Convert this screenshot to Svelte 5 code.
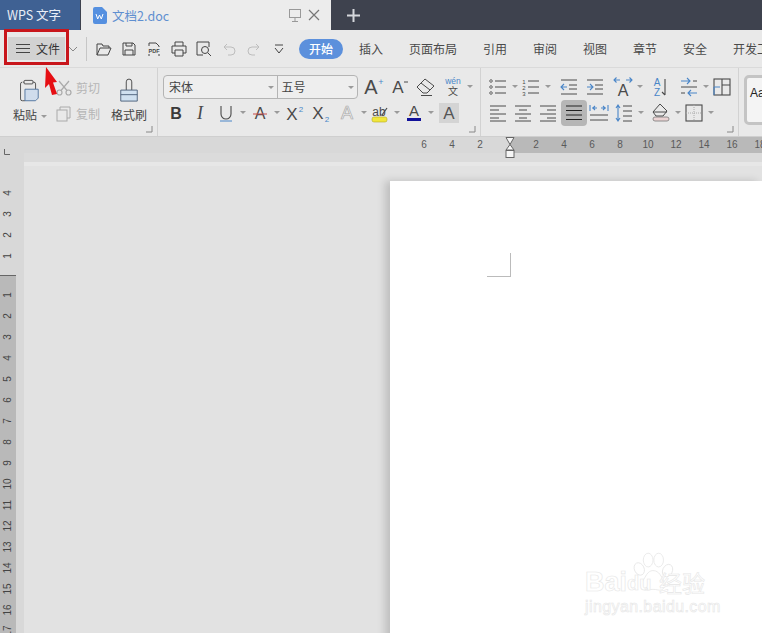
<script lang="ts">
  const dk = "#4a4a4a";
  const bl = "#4a86c8";
  const caps = 'fill="none" stroke-width="1.1"';

  // toolbar glyphs, 20x20 box, letters stay as svg text
  const letter = (ch: string, size = 16, color = dk, extra = "") =>
    `<text x="10" y="16" text-anchor="middle" font-family="Liberation Sans, sans-serif" font-size="${size}" fill="${color}" ${extra}>${ch}</text>`;
  const lines = (rows: number[][], color = dk) =>
    rows.map(([x1, x2, y]) => `<path d="M${x1} ${y}H${x2}" stroke="${color}" stroke-width="1"/>`).join("");

  const icons: Record<string, string> = {
    grow: `<text x="9" y="17" text-anchor="middle" font-family="Liberation Sans, sans-serif" font-size="20" fill="${dk}">A</text><text x="19" y="8" text-anchor="middle" font-family="Liberation Sans, sans-serif" font-size="9" fill="${bl}">+</text>`,
    shrink: letter("A", 17) + `<path d="M16 5h4" stroke="${dk}"/>`,
    eraser: `<g fill="none" stroke-width="1" stroke="${dk}"><path d="M1 10l8-8 9 7-7 7H7z"/><path d="M5 6l9 7"/><path d="M5 18.500h11"/></g>`,
    wen: `<text x="10" y="7" text-anchor="middle" font-family="Liberation Sans, sans-serif" font-size="8.5" fill="${bl}">wén</text><text x="10" y="18" text-anchor="middle" font-family="Noto Sans CJK SC, sans-serif" font-size="10" fill="${dk}">文</text>`,
    bold: letter("B", 16, "#3a3a3a", 'font-weight="700"'),
    italic: `<text x="10" y="16" text-anchor="middle" font-family="Liberation Serif, serif" font-style="italic" font-size="18" fill="${dk}">I</text>`,
    under: `<path d="M5 3v8a5 5 0 0 0 10 0V3" ${caps} stroke="${dk}"/><path d="M4 18h12" stroke="${bl}"/>`,
    strike: letter("A", 16, dk) + `<path d="M3 11h14" stroke="#c84a4a"/>`,
    sup: `<text x="8" y="17" text-anchor="middle" font-family="Liberation Sans, sans-serif" font-size="17" fill="${dk}">X</text><text x="17" y="9" text-anchor="middle" font-family="Liberation Sans, sans-serif" font-size="8" fill="${bl}">2</text>`,
    sub: `<text x="8" y="16" text-anchor="middle" font-family="Liberation Sans, sans-serif" font-size="17" fill="${dk}">X</text><text x="17" y="19" text-anchor="middle" font-family="Liberation Sans, sans-serif" font-size="8" fill="${bl}">2</text>`,
    hollow: `<text x="10" y="16" text-anchor="middle" font-family="Liberation Sans, sans-serif" font-size="18" fill="#f0f0f0" stroke="#aaa" stroke-width=".7">A</text>`,
    mark: `<rect x="2" y="14" width="15" height="5" rx="2" fill="#f1e63c" stroke="#b5ad20" stroke-width=".6"/><text x="9" y="13" text-anchor="middle" font-family="Liberation Sans, sans-serif" font-size="12" fill="${dk}">ab</text><path d="M12 12l5-7" stroke="${dk}" stroke-width="1.2"/>`,
    color: `<text x="10" y="13" text-anchor="middle" font-family="Liberation Sans, sans-serif" font-size="15" fill="${dk}">A</text><rect x="3" y="15" width="14" height="3" fill="#11119a"/>`,
    shadow: `<rect x="0" y="0" width="20" height="20" fill="#d4d4d4"/><text x="10" y="16" text-anchor="middle" font-family="Liberation Sans, sans-serif" font-size="17" fill="#555">A</text>`,
    bullets: `<g fill="none" stroke="${dk}" stroke-width=".8"><circle cx="3" cy="4" r="1.3"/><circle cx="3" cy="10" r="1.3"/><circle cx="3" cy="16" r="1.3"/></g>` + lines([[7, 18, 4], [7, 18, 10], [7, 18, 16]]),
    numbers: `<text x="3" y="7" text-anchor="middle" font-size="6" font-family="Liberation Sans, sans-serif" fill="${dk}">1</text><text x="3" y="13" text-anchor="middle" font-size="6" font-family="Liberation Sans, sans-serif" fill="${dk}">2</text><text x="3" y="19" text-anchor="middle" font-size="6" font-family="Liberation Sans, sans-serif" fill="${dk}">3</text>` + lines([[7, 18, 4], [7, 18, 10], [7, 18, 16]]),
    outdent: lines([[2, 18, 3], [10, 18, 8], [10, 18, 12], [2, 18, 17]]) + `<path d="M8 10H2m3-3l-3 3 3 3" ${caps} stroke="${bl}"/>`,
    indent: lines([[2, 18, 3], [10, 18, 8], [10, 18, 12], [2, 18, 17]]) + `<path d="M2 10h6m-3-3l3 3-3 3" ${caps} stroke="${bl}"/>`,
    spacing: `<text x="10" y="19" text-anchor="middle" font-family="Liberation Sans, sans-serif" font-size="16" fill="${dk}">A</text><path d="M1 3h6M3.500 .500L1 3l2.500 2.500M13 3h6M16.500 .500L19 3l-2.500 2.500" ${caps} stroke="${bl}"/>`,
    sort: `<text x="7" y="9" text-anchor="middle" font-family="Liberation Sans, sans-serif" font-size="10" fill="${bl}">A</text><text x="7" y="19" text-anchor="middle" font-family="Liberation Sans, sans-serif" font-size="10" fill="${bl}">Z</text><path d="M15 2v16m-3-3l3 3" ${caps} stroke="${dk}"/>`,
    swap: lines([[2, 18, 10]]) + `<path d="M2 4h9m-3-3l3 3-3 3M18 16H9m3-3l-3 3 3 3" ${caps} stroke="${bl}"/><path d="M14 4h4" stroke="${dk}"/><path d="M2 16h4" stroke="${dk}"/>`,
    table: `<rect x="2" y="2" width="16" height="16" ${caps} stroke="${dk}"/><path d="M10 2v16M10 8h8" ${caps} stroke="${dk}"/><path d="M2 10h6M2 10v8" ${caps} stroke="${bl}"/>`,
    left: lines([[2, 18, 3], [2, 11, 7], [2, 18, 11], [2, 11, 15], [2, 18, 18]]),
    center: lines([[2, 18, 3], [6, 14, 7], [2, 18, 11], [6, 14, 15], [2, 18, 18]]),
    right: lines([[2, 18, 3], [9, 18, 7], [2, 18, 11], [9, 18, 15], [2, 18, 18]]),
    justify: lines([[2, 18, 3], [2, 18, 7.5], [2, 18, 12], [2, 18, 16.5]], "#222"),
    spread: `<path d="M1 2v6M19 2v6M3 5h5m-2-2l-2 2 2 2M17 5h-5m2-2l2 2-2 2" ${caps} stroke="${bl}"/>` + lines([[1, 19, 12], [1, 19, 17]]),
    leading: `<path d="M4 2v16M2 5l2-3 2 3M2 15l2 3 2-3" ${caps} stroke="${bl}"/>` + lines([[9, 18, 3], [9, 18, 8], [9, 18, 13], [9, 18, 18]]),
    fill: `<g fill="none" stroke-width="1" stroke="${dk}"><path d="M9 1l7 7-4 5H5L2 9z"/><path d="M2 9h14"/></g><rect x="2" y="14" width="16" height="4" rx="2" fill="#ecd4d4" stroke="#777" stroke-width=".8"/>`,
    borders: `<rect x="2" y="2" width="16" height="16" ${caps} stroke="${dk}"/><path d="M10 2v16M2 10h16" stroke="#aaa" stroke-dasharray="1 1"/>`
  };

  // w = distance to the next icon centre
  const fontRow = [
    { i: "bold", w: 24 }, { i: "italic", w: 26 }, { i: "under", w: 34, c: 1 }, { i: "strike", w: 34, c: 1 },
    { i: "sup", w: 26 }, { i: "sub", w: 27 }, { i: "hollow", w: 33, c: 1, off: 1 }, { i: "mark", w: 34, c: 1 },
    { i: "color", w: 35, c: 1 }, { i: "shadow", w: 20 }
  ];
  const fontTop = [{ i: "grow", w: 26 }, { i: "shrink", w: 28 }, { i: "eraser", w: 27 }, { i: "wen", w: 30, c: 1 }];
  const paraTop = [
    { i: "bullets", w: 33, c: 1 }, { i: "numbers", w: 38, c: 1 }, { i: "outdent", w: 26 }, { i: "indent", w: 28 },
    { i: "spacing", w: 37, c: 1 }, { i: "sort", w: 29 }, { i: "swap", w: 33, c: 1 }, { i: "table", w: 20 }
  ];
  const paraRow = [
    { i: "left", w: 25 }, { i: "center", w: 25 }, { i: "right", w: 26 }, { i: "justify", w: 25, on: 1 },
    { i: "spread", w: 25 }, { i: "leading", w: 37, c: 1 }, { i: "fill", w: 33, c: 1 }, { i: "borders", w: 30, c: 1 }
  ];

  const tabs = ["插入", "页面布局", "引用", "审阅", "视图", "章节", "安全", "开发工具"];
  const topNums = [6, 4, 2, "", 2, 4, 6, 8, 10, 12, 14, 16, 18];
  const sideLight = [4, 3, 2, 1];
  const sideDark = Array.from({ length: 17 }, (_, n) => n + 1);
</script>

{#snippet tool(b)}
  <span class="tool" style="width:{b.w}px">
    <svg class:on={b.on} class:off={b.off} width="20" height="20" viewBox="0 0 20 20">{@html icons[b.i]}</svg>
    {#if b.c}<i class="caret"></i>{/if}
  </span>
{/snippet}

{#snippet launcher()}
  <svg class="launch" width="7" height="7" viewBox="0 0 7 7"><path d="M6 0v6H0" fill="none" stroke="#888"/></svg>
{/snippet}

<div class="app">
  <header class="titlebar">
    <div class="brand">WPS 文字</div>
    <div class="doctab">
      <svg width="15" height="17" viewBox="0 0 15 17">
        <path d="M1 2a2 2 0 0 1 2-2h7l5 5v10a2 2 0 0 1-2 2H3a2 2 0 0 1-2-2z" fill="#5590e0" />
        <path d="M4 7l1.700 5L7.500 8l1.800 4L11 7" fill="none" stroke="#fff" />
      </svg>
      <span class="docname">文档2.doc</span>
      <svg class="dock" width="12" height="13" viewBox="0 0 12 13" fill="none" stroke="#999">
        <rect x=".5" y=".5" width="11" height="8" />
        <path d="M6 9v3M3 12.500h6" />
      </svg>
      <svg class="close" width="12" height="12" viewBox="0 0 12 12" stroke="#777" stroke-width="1.200">
        <path d="M1 1l10 10M11 1L1 11" />
      </svg>
    </div>
    <svg class="plus" width="13" height="13" viewBox="0 0 13 13" stroke="#d5d7dc" stroke-width="2">
      <path d="M6.500 0v13M0 6.500h13" />
    </svg>
  </header>

  <nav class="menubar">
    <button class="filebtn" type="button">
      <svg width="14" height="9" viewBox="0 0 14 9" stroke="#444"><path d="M0 .5h14M0 4.500h14M0 8.500h14" /></svg>
      <span>文件</span>
    </button>
    <svg class="chev" width="10" height="6" viewBox="0 0 10 6" fill="none" stroke="#888"><path d="M1 1l4 4 4-4" /></svg>
    <span class="vbar"></span>
    <div class="qat">
      <svg width="16" height="16" viewBox="0 0 16 16" fill="none" stroke="#444"><path d="M1 14V3h5l1 2h6v2M1 14l3-7h11l-3 7z" /></svg>
      <svg width="16" height="16" viewBox="0 0 16 16" fill="none" stroke="#444"><path d="M2 2h10l2 2v10H2zM5 2v3h6V2M4 14V9h8v5" /></svg>
      <svg width="16" height="16" viewBox="0 0 16 16" fill="none" stroke="#444">
        <path d="M3 5V2h7l3 3v1M3 15v-2M13 15v-2" />
        <text x="8" y="12" text-anchor="middle" font-size="5.500" font-weight="700" font-family="Liberation Sans, sans-serif" fill="#444" stroke="none">PDF</text>
      </svg>
      <svg width="16" height="16" viewBox="0 0 16 16" fill="none" stroke="#444"><path d="M4 5V1h8v4M4 12H1V5h14v7h-3M4 9h8v6H4z" /></svg>
      <svg width="16" height="16" viewBox="0 0 16 16" fill="none" stroke="#444"><path d="M7 14H1V1h12v5" /><circle cx="9" cy="9" r="3.500" /><path d="M12 12l3 3" /></svg>
      <svg width="16" height="16" viewBox="0 0 16 16" fill="none" stroke="#bdbdbd"><path d="M3 6h7a4 4 0 0 1 0 8H7M6 3L3 6l3 3" /></svg>
      <svg width="16" height="16" viewBox="0 0 16 16" fill="none" stroke="#bdbdbd"><path d="M13 6H6a4 4 0 0 0 0 8h3M10 3l3 3-3 3" /></svg>
      <svg width="16" height="16" viewBox="0 0 16 16" fill="none" stroke="#444"><path d="M4 4h8M4 7l4 5 4-5" /></svg>
    </div>
    <span class="pill">开始</span>
    <div class="tabs">
      {#each tabs as tab}
        <span class="tab">{tab}</span>
      {/each}
    </div>
  </nav>

  <section class="ribbon">
    <div class="group clip">
      <div class="paste">
        <svg width="23" height="24" viewBox="0 0 26 26" fill="none" stroke="#444">
          <path d="M7 3h12a2 2 0 0 1 2 2v6M9 24H6a2 2 0 0 1-2-2V5a2 2 0 0 1 2-2" />
          <rect x="8" y="1" width="10" height="4" rx="1" fill="#e8e8e8" />
          <path d="M9 11h15v10l-3 3H9z" fill="#cfdcec" stroke="#4a6f9a" />
        </svg>
        <span>粘贴<i class="caret"></i></span>
      </div>
      <div class="cutcopy">
        <div>
          <svg width="16" height="16" viewBox="0 0 16 16" fill="none" stroke="#aaa" stroke-width="1.200">
            <circle cx="3.500" cy="12.500" r="2.500" /><circle cx="12.500" cy="12.500" r="2.500" /><path d="M5 10.500L13 1M11 10.500L3 1" />
          </svg>
          剪切
        </div>
        <div>
          <svg width="16" height="16" viewBox="0 0 16 16" fill="none" stroke="#aaa">
            <rect x="1" y="4" width="10" height="11" /><path d="M4 4V1h10v11h-3" />
          </svg>
          复制
        </div>
      </div>
      <div class="brush">
        <svg width="22" height="24" viewBox="0 0 24 26" fill="none" stroke="#4a5f7a">
          <path d="M9 12V3a3 3 0 0 1 6 0v9" stroke="#444" />
          <path d="M3 12h18v12H3z" fill="#cfe0f0" />
          <path d="M3 17h18" />
        </svg>
        <span>格式刷</span>
      </div>
      {@render launcher()}
    </div>

    <div class="group font">
      <div class="line top">
        <div class="combo">
          <span class="fname">宋体<i class="caret"></i></span>
          <span class="fsize">五号<i class="caret"></i></span>
        </div>
        <div class="tools">
          {#each fontTop as b}{@render tool(b)}{/each}
        </div>
      </div>
      <div class="line">
        {#each fontRow as b}{@render tool(b)}{/each}
      </div>
      {@render launcher()}
    </div>

    <div class="group para">
      <div class="line top">
        {#each paraTop as b}{@render tool(b)}{/each}
      </div>
      <div class="line">
        {#each paraRow as b}{@render tool(b)}{/each}
      </div>
      {@render launcher()}
    </div>

    <div class="group styles">
      <div class="stylebox">AaB</div>
    </div>
  </section>

  <div class="hruler">
    <span class="corner">
      <svg width="7" height="7" viewBox="0 0 7 7" fill="none" stroke="#666"><path d="M1.500 0v5.500H7" /></svg>
    </span>
    <div class="nums">
      <div class="shade"></div>
      <div class="numrow">
        {#each topNums as n}<span>{n}</span>{/each}
      </div>
      <svg class="marker" width="10" height="21" viewBox="0 0 10 21" fill="#f6f6f6" stroke="#666">
        <path d="M1 .5h8L5 7.500zM5 7.500L9 13H1z" />
        <rect x="1" y="13.500" width="8" height="7" />
      </svg>
    </div>
  </div>

  <div class="work">
    <aside class="vruler">
      <div class="vlight">
        {#each sideLight as n}<span><em>{n}</em></span>{/each}
      </div>
      <div class="vdark">
        {#each sideDark as n}<span><em>{n}</em></span>{/each}
      </div>
    </aside>
    <div class="canvas">
      <div class="page">
        <div class="margin"></div>
        <div class="mark">
          <svg class="paw" width="42" height="42" viewBox="0 0 52 50" fill="#fff" stroke="#e6e6e6">
            <ellipse cx="9" cy="20" rx="6" ry="8" transform="rotate(-25 9 20)" />
            <ellipse cx="20" cy="9" rx="6" ry="8.500" />
            <ellipse cx="33" cy="9" rx="6" ry="8.500" />
            <ellipse cx="44" cy="22" rx="6" ry="8" transform="rotate(25 44 22)" />
            <path d="M26 22c8 0 10 8 14 13 3 5-1 13-8 11-4-1-8-1-12 0-7 2-11-6-7-11 4-5 6-13 13-13z" />
          </svg>
          <div class="logo"><span>Bai</span><span class="du">du</span><span class="jy">经验</span></div>
          <div class="url">jingyan.baidu.com</div>
        </div>
      </div>
    </div>
  </div>

  <!-- annotation painted over the screenshot -->
  <div class="redbox"></div>
  <svg class="arrow" width="16" height="30" viewBox="0 0 16 30"><path d="M2 0L13 15 9 15.500 13 27 8 28 5 17 1 21z" fill="#e60f14" /></svg>
</div>

<style>
  :global(body) {
    margin: 0;
    background: #e2e2e2;
  }

  .app {
    position: relative;
    width: 762px;
    height: 633px;
    overflow: hidden;
    font-family: "Noto Sans CJK SC", "Liberation Sans", sans-serif;
    font-size: 12px;
    color: #444;
  }

  svg {
    display: block;
    flex: none;
    overflow: visible;
  }

  .titlebar {
    display: flex;
    height: 30px;
    background: #3e424e;
    align-items: stretch;
  }

  .brand {
    width: 73px;
    padding-left: 7px;
    margin-right: 1px;
    background: #3f6193;
    color: #e9eef6;
    font-size: 12.5px;
    line-height: 30px;
  }

  .doctab {
    width: 250px;
    display: flex;
    align-items: center;
    background: #ececec;
    padding-left: 11px;
    box-sizing: border-box;
  }

  .docname {
    margin-left: 5px;
    width: 177px;
    font-size: 12.5px;
    color: #5f8fd0;
  }

  .close {
    margin-left: 7px;
  }

  .plus {
    margin: 9px 0 0 16px;
  }

  .menubar {
    display: flex;
    align-items: center;
    height: 38px;
    background: #e9e9e9;
    border-bottom: 1px solid #dadada;
    box-sizing: border-box;
  }

  .menubar > * {
    flex: none;
  }

  .filebtn {
    margin-left: 8px;
    width: 57px;
    height: 23px;
    margin-top: -1px;
    padding: 0 0 0 8px;
    border: 0;
    background: #d2d2d2;
    display: flex;
    align-items: center;
    gap: 6px;
    font: inherit;
    color: #333;
    white-space: nowrap;
  }

  .chev {
    margin-left: 3px;
  }

  .vbar {
    width: 1px;
    height: 24px;
    margin-left: 8px;
    background: #c6c6c6;
  }

  .qat {
    display: flex;
    gap: 9px;
    margin-left: 9px;
  }

  .pill {
    margin-left: 12px;
    width: 44px;
    height: 20px;
    border-radius: 10px;
    background: #5c90dc;
    color: #fff;
    font-weight: 500;
    text-align: center;
    line-height: 20px;
  }

  .tabs {
    display: flex;
    gap: 26px;
    margin-left: 16px;
  }

  .tab {
    flex: none;
    color: #4a4a4a;
    white-space: nowrap;
  }

  .ribbon {
    display: flex;
    height: 69px;
    background: #e9e9e9;
    border-bottom: 1px solid #cfcfcf;
    box-sizing: border-box;
  }

  .group {
    position: relative;
    flex: none;
    border-right: 1px solid #d2d2d2;
    box-sizing: border-box;
  }

  .launch {
    position: absolute;
    right: 4px;
    bottom: 3px;
  }

  .clip {
    width: 158px;
    display: flex;
    color: #444;
  }

  .paste {
    width: 56px;
    padding: 11px 0 0 17px;
    box-sizing: border-box;
    display: flex;
    flex-direction: column;
    gap: 3px;
  }

  .paste span {
    margin-left: -4px;
    white-space: nowrap;
  }

  .cutcopy {
    width: 50px;
    padding-top: 11px;
    color: #b6b6b6;
    display: flex;
    flex-direction: column;
    gap: 9px;
  }

  .cutcopy div {
    display: flex;
    align-items: center;
    gap: 4px;
    height: 17px;
  }

  .brush {
    margin-left: 5px;
    display: flex;
    flex-direction: column;
    align-items: center;
    padding-top: 11px;
    gap: 3px;
  }

  .font {
    width: 323px;
    padding: 6px 0 0 5px;
  }

  .line {
    display: flex;
    align-items: center;
    height: 25px;
    margin-bottom: 1px;
  }

  .font .line:not(.top) {
    padding-left: 3px;
  }

  .tools {
    display: flex;
    margin-left: 4px;
  }

  .combo {
    display: flex;
    width: 195px;
    height: 24px;
    border: 1px solid #b4b4b4;
    border-radius: 4px;
    box-sizing: border-box;
    background: #eeeeee;
    line-height: 22px;
    flex: none;
  }

  .fname,
  .fsize {
    position: relative;
    padding-left: 5px;
    box-sizing: border-box;
    font-size: 12px;
  }

  .fname {
    width: 115px;
    border-right: 1px solid #b4b4b4;
  }

  .fsize {
    width: 79px;
    padding-left: 3px;
  }

  .fname .caret,
  .fsize .caret {
    position: absolute;
    right: 3px;
    top: 10px;
    margin: 0;
  }

  .tool {
    display: flex;
    align-items: center;
    flex: none;
  }

  .tool svg.on {
    padding: 2px;
    margin: -2px;
    background: #b6b6b6;
    border-radius: 3px;
    box-shadow: 0 0 0 1px #b6b6b6;
  }

  .caret {
    display: inline-block;
    width: 0;
    height: 0;
    margin-left: 4px;
    border: 3px solid transparent;
    border-top: 3px solid #9a9a9a;
    border-bottom: 0;
    vertical-align: middle;
  }

  .para {
    width: 258px;
    padding: 6px 0 0 7px;
  }

  .styles {
    flex: 1;
    border: 0;
    padding: 7px 0 0 5px;
  }

  .stylebox {
    width: 60px;
    height: 50px;
    padding: 8px 0 0 3px;
    box-sizing: border-box;
    background: #f4f4f4;
    border: 3px solid #c4c4c4;
    border-radius: 5px;
    color: #222;
    font-family: "Liberation Sans", sans-serif;
    font-size: 12px;
  }

  .hruler {
    display: flex;
    height: 25px;
    background: #dbdbdb;
  }

  .corner {
    width: 24px;
    padding: 12px 0 0 3px;
    box-sizing: border-box;
    flex: none;
    background: #d8d8d8;
  }

  .nums {
    position: relative;
    flex: 1;
    height: 16px;
    background: #d8d8d8;
  }

  .shade {
    position: absolute;
    left: 486px;
    right: 0;
    top: 0;
    bottom: 0;
    background: #b9b9b9;
  }

  .numrow {
    position: relative;
    display: flex;
    padding-left: 386px;
  }

  .numrow span {
    width: 28px;
    flex: none;
    text-align: center;
    font-size: 10px;
    line-height: 15px;
    color: #5a5a5a;
    font-family: "Liberation Sans", sans-serif;
  }

  .marker {
    position: absolute;
    left: 481px;
    top: 0;
  }

  .work {
    display: flex;
    height: 471px;
  }

  .vruler {
    width: 24px;
    flex: none;
    background: #d8d8d8;
    overflow: hidden;
  }

  .vlight,
  .vdark {
    width: 16px;
    text-align: center;
  }

  .vlight {
    height: 114px;
    padding-top: 20px;
    box-sizing: border-box;
    background: #d8d8d8;
    border-bottom: 1px solid #666;
  }

  .vdark {
    background: #b9b9b9;
    padding-top: 8px;
    height: 400px;
  }

  .vruler span {
    display: flex;
    height: 21px;
    align-items: center;
    justify-content: center;
  }

  .vruler em {
    display: block;
    transform: rotate(-90deg);
    font-style: normal;
    font-size: 10px;
    line-height: 10px;
    color: #444;
    font-family: "Liberation Sans", sans-serif;
  }

  .canvas {
    flex: 1;
    padding: 19px 0 0 366px;
    background: linear-gradient(#e7e7e7 4px, #e2e2e2 4px);
    overflow: hidden;
  }

  .page {
    position: relative;
    height: 460px;
    background: #fff;
    box-shadow: -5px 0 8px rgba(0, 0, 0, 0.16);
  }

  .margin {
    width: 24px;
    height: 24px;
    margin: 72px 0 0 97px;
    position: absolute;
    box-sizing: border-box;
    border-right: 1px solid #bbb;
    border-bottom: 1px solid #bbb;
  }

  .mark {
    position: absolute;
    left: 195px;
    top: 368px;
    width: 140px;
    color: #fff;
    font-family: "Liberation Sans", sans-serif;
    -webkit-text-stroke: 0.6px #e6e6e6;
  }

  .paw {
    position: absolute;
    left: 47px;
    top: 3px;
  }

  .logo {
    position: relative;
    display: flex;
    padding-top: 17px;
    font-size: 27px;
    font-weight: 700;
    line-height: 32px;
  }

  .logo .du {
    margin: 4px 0 0 0;
    font-size: 20px;
    line-height: 26px;
    width: 32px;
  }

  .logo .jy {
    font-family: "Noto Sans CJK SC", sans-serif;
    font-size: 23px;
    font-weight: 400;
  }

  .url {
    font-size: 16px;
    line-height: 18px;
    font-weight: 400;
    letter-spacing: 0.4px;
    white-space: nowrap;
  }

  .redbox {
    position: absolute;
    left: 4px;
    top: 29px;
    width: 65px;
    height: 36px;
    box-sizing: border-box;
    border: 3px solid #c8161c;
  }

  .arrow {
    position: absolute;
    left: 44px;
    top: 67px;
  }
</style>
